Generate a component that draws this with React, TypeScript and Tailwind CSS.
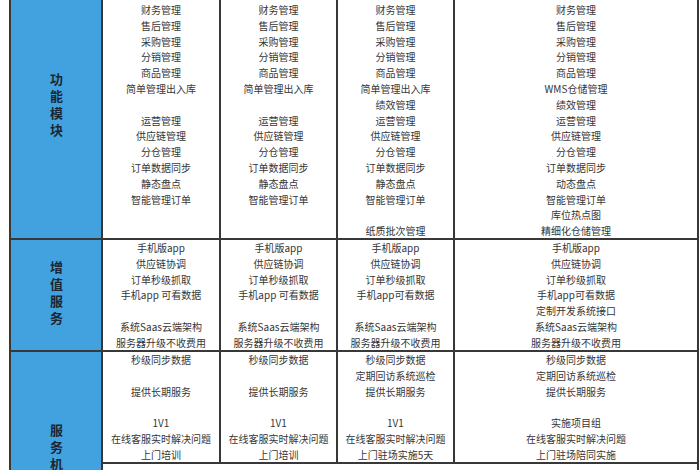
import React from "react";

const font = { fontFamily: '"Noto Sans CJK SC", "Noto Sans", sans-serif' };

type Col = string[];

const row1: Col[] = [
  ["财务管理", "售后管理", "采购管理", "分销管理", "商品管理", "简单管理出入库", "", "运营管理", "供应链管理", "分仓管理", "订单数据同步", "静态盘点", "智能管理订单"],
  ["财务管理", "售后管理", "采购管理", "分销管理", "商品管理", "简单管理出入库", "", "运营管理", "供应链管理", "分仓管理", "订单数据同步", "静态盘点", "智能管理订单"],
  ["财务管理", "售后管理", "采购管理", "分销管理", "商品管理", "简单管理出入库", "绩效管理", "运营管理", "供应链管理", "分仓管理", "订单数据同步", "静态盘点", "智能管理订单", "", "纸质批次管理"],
  ["财务管理", "售后管理", "采购管理", "分销管理", "商品管理", "WMS仓储管理", "绩效管理", "运营管理", "供应链管理", "分仓管理", "订单数据同步", "动态盘点", "智能管理订单", "库位热点图", "精细化仓储管理"],
];

const row2: Col[] = [
  ["手机版app", "供应链协调", "订单秒级抓取", "手机app 可看数据", "", "系统Saas云端架构", "服务器升级不收费用"],
  ["手机版app", "供应链协调", "订单秒级抓取", "手机app 可看数据", "", "系统Saas云端架构", "服务器升级不收费用"],
  ["手机版app", "供应链协调", "订单秒级抓取", "手机app可看数据", "", "系统Saas云端架构", "服务器升级不收费用"],
  ["手机版app", "供应链协调", "订单秒级抓取", "手机app可看数据", "定制开发系统接口", "系统Saas云端架构", "服务器升级不收费用"],
];

const row3: Col[] = [
  ["秒级同步数据", "", "提供长期服务", "", "1V1", "在线客服实时解决问题", "上门培训"],
  ["秒级同步数据", "", "提供长期服务", "", "1V1", "在线客服实时解决问题", "上门培训"],
  ["秒级同步数据", "定期回访系统巡检", "提供长期服务", "", "1V1", "在线客服实时解决问题", "上门驻场实施5天"],
  ["秒级同步数据", "定期回访系统巡检", "提供长期服务", "", "实施项目组", "在线客服实时解决问题", "上门驻场陪同实施"],
];

function Cell({ lines, top }: { lines: string[]; top: string }) {
  return (
    <div className={`border-r-2 border-b-2 border-[#383838] bg-white overflow-hidden ${top}`}>
      {lines.map((l, i) => (
        <div key={i} className="h-[15.8px] leading-[15.8px] text-center text-[10px] text-[#363636] whitespace-nowrap">
          {l}
        </div>
      ))}
    </div>
  );
}

// vertical header label, one text run
function Label({ text }: { text: string }) {
  return (
    <div className="[writing-mode:vertical-rl] whitespace-nowrap shrink-0 text-[13px] leading-[16px] tracking-[4px] font-bold text-[#1c2633]">
      {text}
    </div>
  );
}

export default function App() {
  return (
    <div className="w-[700px] h-[470px] overflow-hidden bg-white pl-[9px]" style={font}>
      <div className="w-[690px] h-[470px] border-l-2 border-[#383838] grid grid-cols-[92px_118px_117px_117px_244px] grid-rows-[240px_112px_112px_1fr]">
        <div className="border-r-2 border-b-2 border-[#383838] bg-[#41a2df] flex flex-col items-center pt-[73px]">
          <Label text="功能模块" />
        </div>
        {row1.map((c, i) => (
          <Cell key={"a" + i} lines={c} top="pt-[2px]" />
        ))}
        <div className="border-r-2 border-b-2 border-[#383838] bg-[#41a2df] flex flex-col items-center justify-center">
          <Label text="增值服务" />
        </div>
        {row2.map((c, i) => (
          <Cell key={"b" + i} lines={c} top="pt-0" />
        ))}
        <div className="row-span-2 border-r-2 border-[#383838] bg-[#41a2df] flex flex-col items-center pt-[72px] overflow-hidden">
          <Label text="服务机制" />
        </div>
        {row3.map((c, i) => (
          <Cell key={"c" + i} lines={c} top="pt-0" />
        ))}
        <div className="col-span-4 border-r-2 border-[#383838] bg-white" />
      </div>
    </div>
  );
}
